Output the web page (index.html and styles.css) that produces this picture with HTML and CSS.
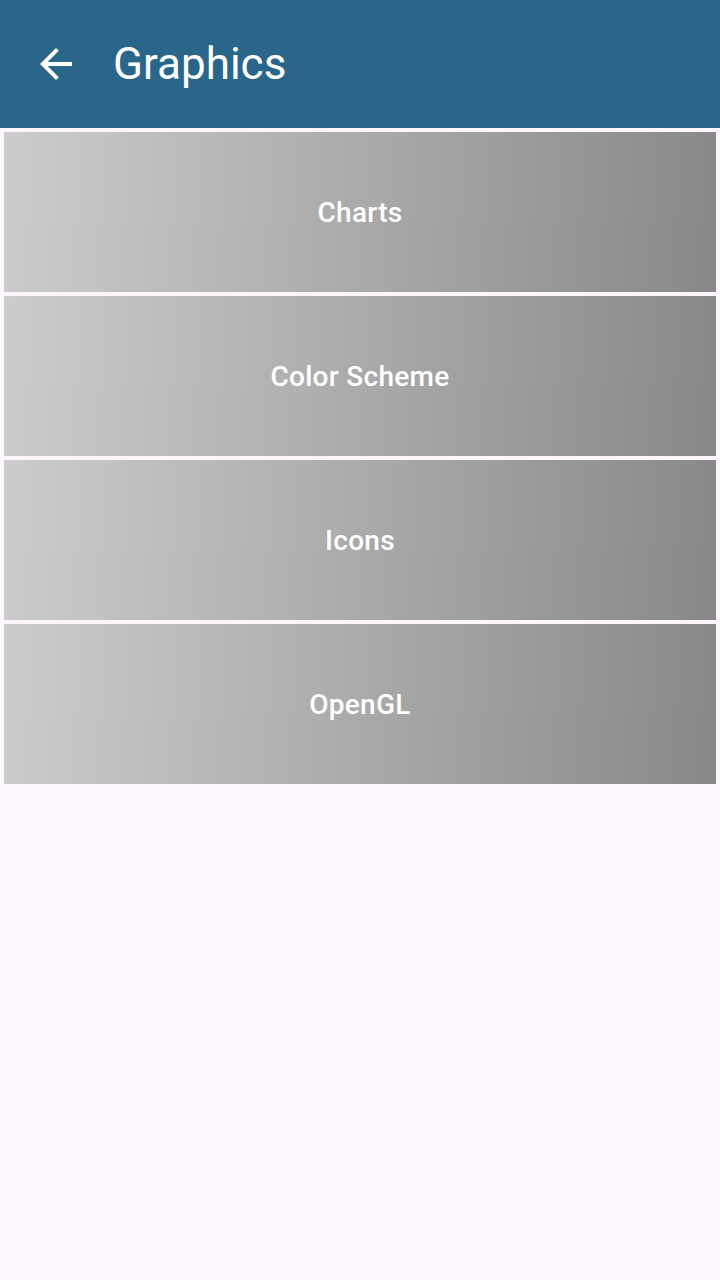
FILE: index.html
```html
<!DOCTYPE html>
<html>
<head>
<meta charset="utf-8">
<link rel="stylesheet" href="styles.css">
</head>
<body>
<header class="appbar">
  <svg class="back" width="48" height="48" viewBox="0 0 24 24"><path d="M20 11H7.83l5.59-5.59L12 4l-8 8 8 8 1.41-1.41L7.83 13H20v-2z" fill="#fff"/></svg>
  <h1 class="title">Graphics</h1>
</header>
<main class="list">
  <div class="card">Charts</div>
  <div class="card">Color Scheme</div>
  <div class="card">Icons</div>
  <div class="card">OpenGL</div>
</main>
</body>
</html>
```
FILE: styles.css
```css
html, body { margin: 0; padding: 0; }
body {
  width: 720px;
  height: 1280px;
  background: #fdf7fd;
  font-family: Roboto, "Liberation Sans", sans-serif;
}
.appbar {
  height: 128px;
  background: #296689;
  display: flex;
  align-items: center;
  padding-left: 32px;
  box-sizing: border-box;
}
.back { display: block; }
.title {
  margin: 0 0 0 33px;
  color: #fff;
  font-weight: 400;
  font-size: 44px;
}
.list {
  display: flex;
  flex-direction: column;
  gap: 4px;
  padding: 4px 4px 0 4px;
}
.card {
  height: 160px;
  display: flex;
  align-items: center;
  justify-content: center;
  color: #fff;
  font-weight: 500;
  font-size: 28px;
  letter-spacing: 0.3px;
  background: linear-gradient(95deg, #cccccc 0%, #888888 100%);
}
```
